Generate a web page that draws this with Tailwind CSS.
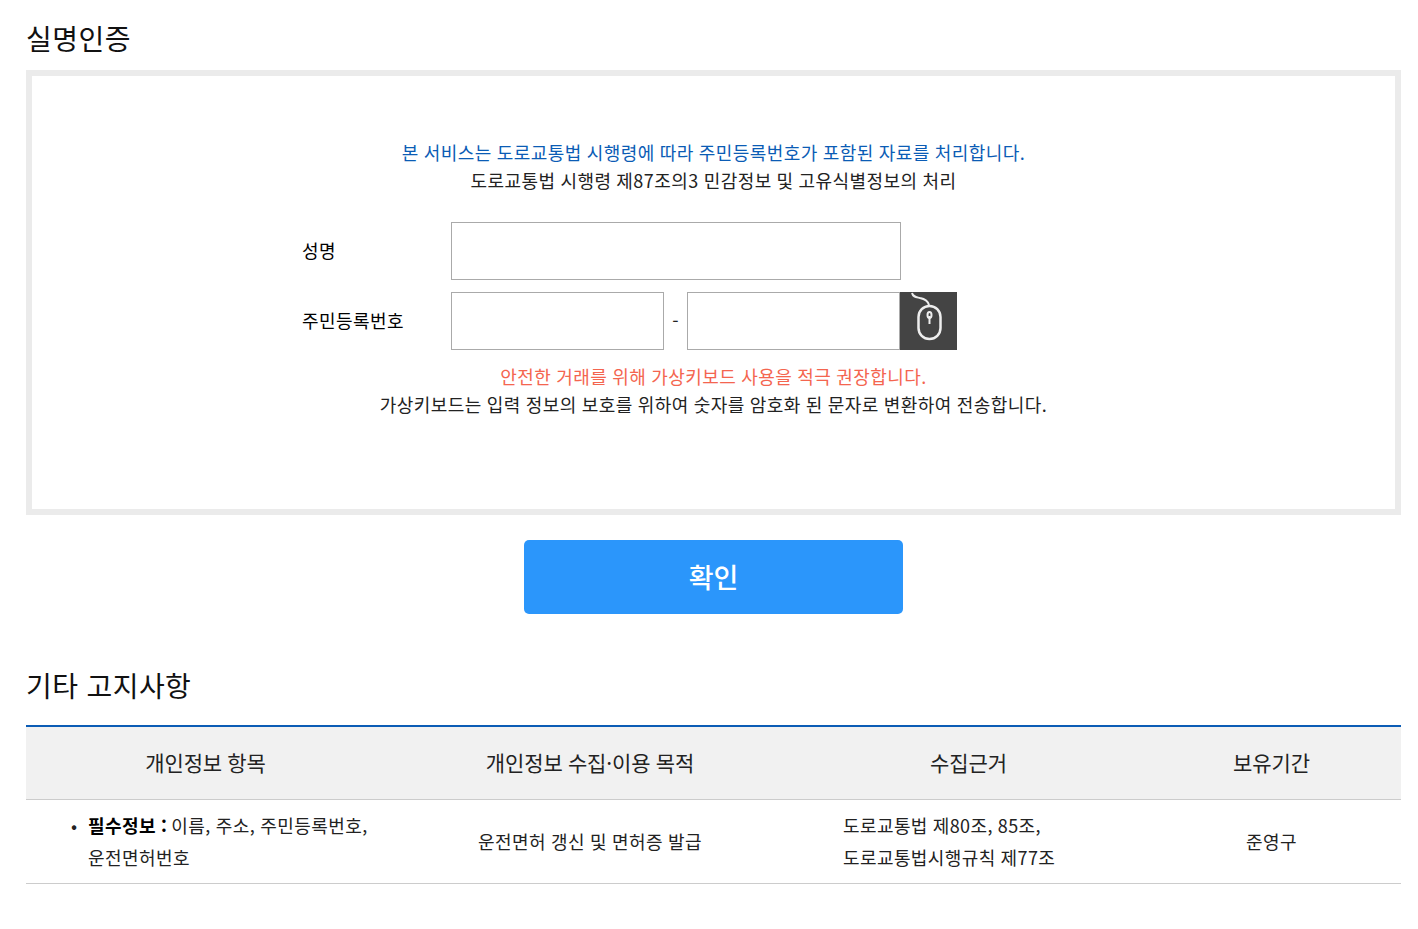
<!DOCTYPE html>
<html lang="ko">
<head>
<meta charset="UTF-8">
<title>실명인증</title>
<script src="https://cdn.jsdelivr.net/npm/@tailwindcss/browser@4"></script>
</head>
<body class="bg-white text-[#222] font-['Noto_Sans_CJK_KR','Noto_Sans',sans-serif]">
<div class="pl-[26px] pr-[17px]">
  <h2 class="pt-[16px] h-[70px] text-[28px] leading-[44px] font-normal tracking-[0.5px] text-[#111]">실명인증</h2>
  <div class="h-[445px] border-[6px] border-[#ebebeb] pt-[62px] text-center text-[18px] leading-[28px] tracking-[0.44px] [word-spacing:-0.5px]">
    <p class="text-[#0b5cb5]">본 서비스는 도로교통법 시행령에 따라 주민등록번호가 포함된 자료를 처리합니다.</p>
    <p>도로교통법 시행령 제87조의3 민감정보 및 고유식별정보의 처리</p>
    <div class="mt-[28px] ml-[270px] flex items-center text-left">
      <label class="w-[149px] font-normal text-black -mt-[2px]">성명</label>
      <input type="text" class="w-[450px] h-[58px] border border-[#aaa]">
    </div>
    <div class="mt-[12px] ml-[270px] flex items-center text-left">
      <label class="w-[149px] font-normal text-black -mt-[2px]">주민등록번호</label>
      <input type="text" class="w-[213px] h-[58px] border border-[#aaa]">
      <span class="w-[23px] text-center -mt-[2px]">-</span>
      <input type="text" class="w-[213px] h-[58px] border border-[#aaa]">
      <button class="w-[57px] h-[58px] bg-[#444] flex items-center justify-center">
        <svg width="57" height="58" viewBox="0 0 57 58" fill="none" stroke="#eee" stroke-width="2.500"><path d="M12 1c1 4 4 4 8 5 5 1 8 3 9 7" stroke-width="2"/><rect x="18.500" y="14" width="22" height="33" rx="11"/><path d="M29.500 24v8" stroke-width="2"/><ellipse cx="29.500" cy="23" rx="2" ry="3" stroke-width="2"/></svg>
      </button>
    </div>
    <p class="mt-[12px] text-[#f4654f]">안전한 거래를 위해 가상키보드 사용을 적극 권장합니다.</p>
    <p>가상키보드는 입력 정보의 보호를 위하여 숫자를 암호화 된 문자로 변환하여 전송합니다.</p>
  </div>
  <div class="mt-[25px] flex justify-center">
    <button class="w-[379px] h-[74px] rounded-[5px] bg-[#2b96fb] text-white text-[27px] leading-[70px] font-medium">확인</button>
  </div>
  <h2 class="mt-[49px] h-[62px] text-[28px] leading-[44px] font-normal tracking-[0.4px] text-[#111]">기타 고지사항</h2>
  <table class="w-full border-t-2 border-[#0b5cb5] text-[18px] tracking-[0.44px] [word-spacing:-0.5px] border-collapse table-fixed">
    <thead>
      <tr class="h-[73px] bg-[#f1f1f1] border-b border-[#ccc] text-[21px] tracking-[-0.1px]">
        <th class="w-[359px] font-normal">개인정보 항목</th>
        <th class="w-[410px] font-normal">개인정보 수집·이용 목적</th>
        <th class="w-[347px] font-normal">수집근거</th>
        <th class="font-normal">보유기간</th>
      </tr>
    </thead>
    <tbody>
      <tr class="h-[84px] border-b border-[#ccc] leading-[32px]">
        <td class="pl-[45px]">
          <div class="flex">
            <span class="w-[17px]">•</span>
            <div><b class="font-bold text-black mr-[-1px]">필수정보 :</b> 이름, 주소, 주민등록번호,<br>운전면허번호</div>
          </div>
        </td>
        <td class="text-center">운전면허 갱신 및 면허증 발급</td>
        <td class="pl-[48px] tracking-[0.4px]">도로교통법 제80조, 85조,<br>도로교통법시행규칙 제77조</td>
        <td class="text-center">준영구</td>
      </tr>
    </tbody>
  </table>
</div>
</body>
</html>
